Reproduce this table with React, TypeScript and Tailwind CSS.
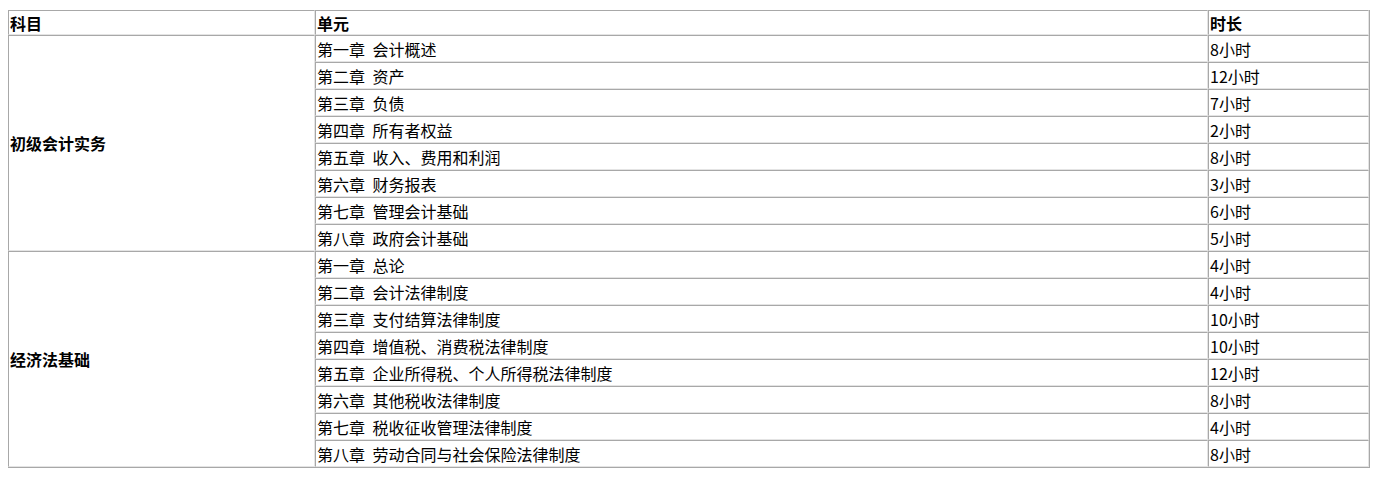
import React from "react";

const groups: { subject: string; rows: [string, string][] }[] = [
  {
    subject: "初级会计实务",
    rows: [
      ["第一章 会计概述", "8小时"],
      ["第二章 资产", "12小时"],
      ["第三章 负债", "7小时"],
      ["第四章 所有者权益", "2小时"],
      ["第五章 收入、费用和利润", "8小时"],
      ["第六章 财务报表", "3小时"],
      ["第七章 管理会计基础", "6小时"],
      ["第八章 政府会计基础", "5小时"],
    ],
  },
  {
    subject: "经济法基础",
    rows: [
      ["第一章 总论", "4小时"],
      ["第二章 会计法律制度", "4小时"],
      ["第三章 支付结算法律制度", "10小时"],
      ["第四章 增值税、消费税法律制度", "10小时"],
      ["第五章 企业所得税、个人所得税法律制度", "12小时"],
      ["第六章 其他税收法律制度", "8小时"],
      ["第七章 税收征收管理法律制度", "4小时"],
      ["第八章 劳动合同与社会保险法律制度", "8小时"],
    ],
  },
];

const base =
  "border-t border-l border-r border-b border-t-[#a8a8a8] border-l-[#a8a8a8] border-r-[#e4e4e4] border-b-[#e4e4e4] p-0 pl-px align-middle text-left";
const cell = base + " h-[27px]";
const head = base + " h-[25px] font-bold";

export default function App() {
  return (
    <div
      className="bg-white min-h-[483px] pt-[10px] pl-2 text-black text-[16px] leading-[20px]"
      style={{ fontFamily: '"Noto Sans CJK SC", "Liberation Sans", sans-serif' }}
    >
      <table className="w-[1361px] border-separate border-spacing-0 border-r border-b border-[#a8a8a8] table-fixed">
        <colgroup>
          <col className="w-[307px]" />
          <col className="w-[893px]" />
          <col className="w-[161px]" />
        </colgroup>
        <thead>
          <tr>
            <th className={head}>科目</th>
            <th className={head}>单元</th>
            <th className={head}>时长</th>
          </tr>
        </thead>
        <tbody>
          {groups.map((g) =>
            g.rows.map((r, i) => (
              <tr key={g.subject + i}>
                {i === 0 && (
                  <td rowSpan={g.rows.length} className={cell + " font-bold"}>
                    {g.subject}
                  </td>
                )}
                <td className={cell + " [word-spacing:4px] whitespace-pre"}>{r[0]}</td>
                <td className={cell}>{r[1]}</td>
              </tr>
            ))
          )}
        </tbody>
      </table>
    </div>
  );
}
